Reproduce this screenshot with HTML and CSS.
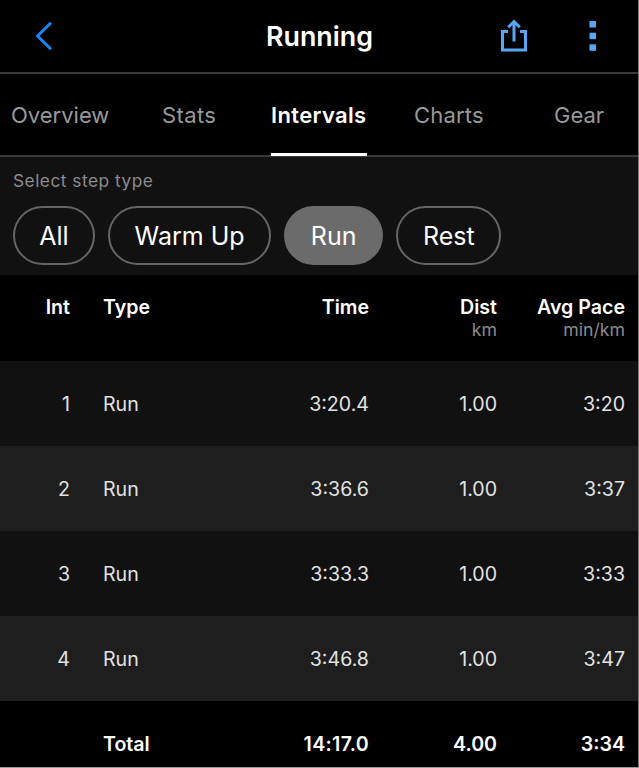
FILE: index.html
```html
<!DOCTYPE html>
<html lang="en">
<head>
    <meta charset="UTF-8">
    <meta name="viewport" content="width=device-width, initial-scale=1.0">
    <title>Running</title>
    <link rel="stylesheet" href="styles.css">
</head>
<body>
    <div class="app">
        <header class="topbar">
            <button class="back" aria-label="Back">
                <svg width="18" height="30" viewBox="0 0 18 30"><path d="M16 1.8L2.6 15L16 28.2" fill="none" stroke="#1a84f8" stroke-width="3"/></svg>
            </button>
            <h1>Running</h1>
            <div class="actions">
                <button aria-label="Share">
                    <svg width="28" height="34" viewBox="0 0 28 34"><path d="M8 12.5H2.5V31H25.5V12.5H20M14 22.5V2.5M8.2 8.3L14 2.5L19.8 8.3" fill="none" stroke="#5aa6f5" stroke-width="3"/></svg>
                </button>
                <button aria-label="More">
                    <svg width="8" height="30" viewBox="0 0 8 30" fill="#5aa6f5"><rect x="0.5" width="6.5" height="6.5"/><rect x="0.5" y="11.7" width="6.5" height="6.5"/><rect x="0.5" y="23.3" width="6.5" height="6.5"/></svg>
                </button>
            </div>
        </header>

        <nav class="tabs">
            <a class="tab">Overview</a>
            <a class="tab spaced">Stats</a>
            <a class="tab active">Intervals</a>
            <a class="tab charts">Charts</a>
            <a class="tab">Gear</a>
        </nav>

        <section class="filter">
            <p>Select step type</p>
            <div class="pills">
                <button class="pill all">All</button>
                <button class="pill warm-up">Warm Up</button>
                <button class="pill run selected">Run</button>
                <button class="pill rest">Rest</button>
            </div>
        </section>

        <table>
            <colgroup>
                <col class="col-int">
                <col class="col-type">
                <col class="col-time">
                <col class="col-dist">
                <col class="col-pace">
            </colgroup>
            <thead>
                <tr>
                    <th>Int</th>
                    <th class="type">Type</th>
                    <th>Time</th>
                    <th>Dist<span>km</span></th>
                    <th>Avg Pace<span>min/km</span></th>
                </tr>
            </thead>
            <tbody>
                <tr><td>1</td><td class="type">Run</td><td>3:20.4</td><td>1.00</td><td>3:20</td></tr>
                <tr><td>2</td><td class="type">Run</td><td>3:36.6</td><td>1.00</td><td>3:37</td></tr>
                <tr><td>3</td><td class="type">Run</td><td>3:33.3</td><td>1.00</td><td>3:33</td></tr>
                <tr><td>4</td><td class="type">Run</td><td>3:46.8</td><td>1.00</td><td>3:47</td></tr>
            </tbody>
            <tfoot>
                <tr><td></td><td class="type">Total</td><td class="total-time">14:17.0</td><td>4.00</td><td>3:34</td></tr>
            </tfoot>
        </table>
    </div>
</body>
</html>
```
FILE: styles.css
```css
* {
    box-sizing: border-box;
}
body {
    margin: 0;
    background-color: #000;
    color: #fff;
    font-family: Inter, sans-serif;
}
.app {
    width: 639px;
    height: 768px;
    overflow: hidden;
    border-right: 1px solid #777;
    border-bottom: 1px solid #999;
}
button {
    padding: 0;
    border: none;
    background: none;
    color: inherit;
    font-family: inherit;
}
svg {
    display: block;
}
.topbar {
    display: grid;
    grid-template-columns: 200px 1fr 200px;
    align-items: center;
    height: 74px;
    border-bottom: 2px solid #393939;
}
.back {
    padding-left: 35px;
    justify-self: start;
}
h1 {
    margin: 0;
    padding-left: 1px;
    text-align: center;
    font-size: 26.8px;
    font-weight: 600;
}
.actions {
    display: flex;
    align-items: center;
    justify-content: flex-end;
    gap: 61px;
    padding-right: 41px;
}
.tabs {
    display: grid;
    grid-template-columns: 151px 109px 96px 187px 1fr;
    height: 83px;
    padding-left: 11px;
    border-bottom: 2px solid #393939;
    font-size: 22px;
    line-height: 82px;
    color: #999;
}
.tab {
    height: 82px;
}
.spaced {
    letter-spacing: 0.4px;
}
.active {
    border-bottom: 3px solid #fff;
    color: #fff;
    font-weight: 600;
    letter-spacing: 0.35px;
}
.charts {
    padding-left: 47px;
    letter-spacing: 0.2px;
}
.filter {
    height: 118px;
    padding: 14px 13px 0;
    background-color: #111;
}
.filter p {
    margin: 0 0 15px;
    font-size: 17.3px;
    line-height: 20px;
    letter-spacing: 0.5px;
    color: #8c8c8c;
}
.pills {
    display: flex;
    gap: 13.1px;
}
.pill {
    height: 59px;
    border: 2px solid #656565;
    border-radius: 30px;
    font-size: 25px;
}
.all {
    width: 82px;
}
.warm-up {
    width: 163px;
}
.run {
    width: 99px;
}
.rest {
    width: 105px;
}
.selected {
    background-color: #6b6b6b;
    border-color: #6b6b6b;
}
table {
    width: 638px;
    table-layout: fixed;
    border-collapse: collapse;
    font-size: 19.6px;
}
.col-int {
    width: 70px;
}
.col-type {
    width: 140px;
}
.col-time {
    width: 159px;
}
.col-dist {
    width: 128px;
}
th, td {
    padding: 0;
    text-align: right;
}
th:last-child, td:last-child {
    padding-right: 13px;
}
.type {
    padding-left: 33px;
    text-align: left;
}
th {
    height: 86px;
    padding-top: 20px;
    vertical-align: top;
    font-weight: 600;
    line-height: 24px;
}
th span {
    display: block;
    font-size: 17.7px;
    font-weight: 400;
    line-height: 22px;
    color: #8c8c8c;
}
td {
    height: 85px;
    color: #e2e2e2;
}
tbody tr {
    background-color: #111;
}
tbody tr:nth-child(even) {
    background-color: #1e1e1e;
}
tfoot td {
    color: #fff;
    font-weight: 600;
}
.total-time {
    letter-spacing: 0.3px;
}
```
